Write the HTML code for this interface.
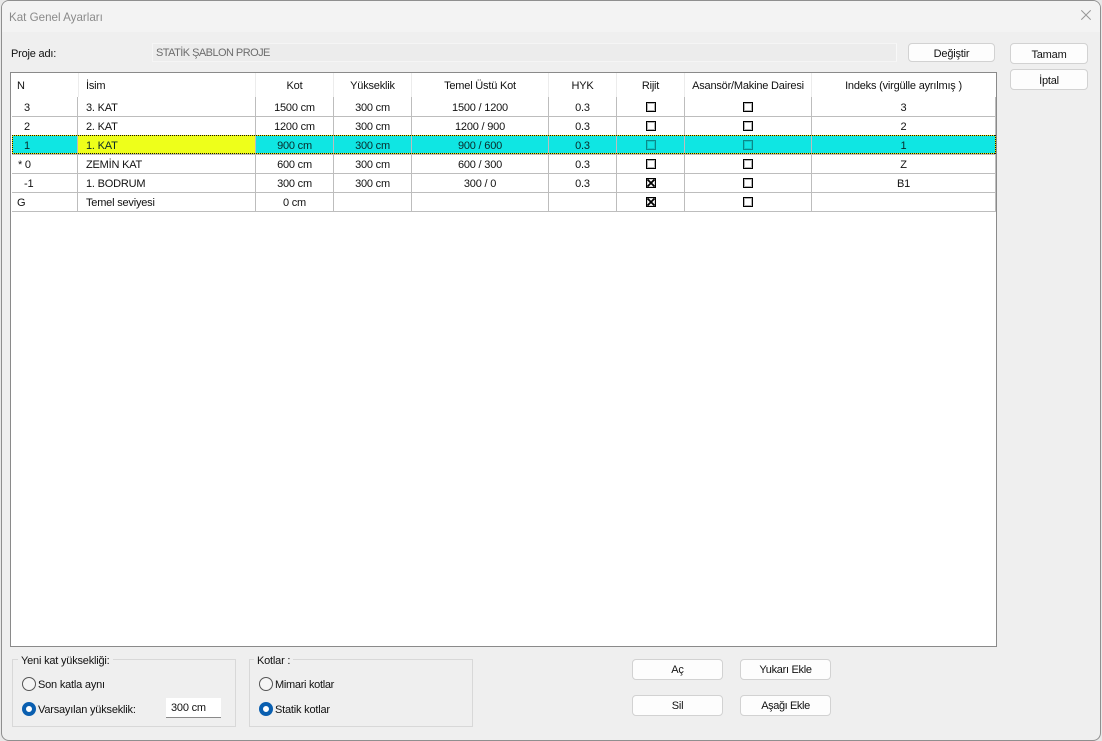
<!DOCTYPE html>
<html>
<head>
<meta charset="utf-8">
<style>
html,body{margin:0;padding:0;width:1102px;height:741px;overflow:hidden;background:#e8e8e8;}
*{box-sizing:border-box;}
body{font-family:"Liberation Sans",sans-serif;font-size:11px;letter-spacing:-.2px;color:#111;position:relative;}
#win{position:absolute;left:1px;top:0;width:1100px;height:741px;background:#efefef;border:1px solid #8f8f8f;border-radius:8px;overflow:hidden;}
#tb{position:absolute;left:0;top:0;width:1098px;height:31px;background:#f3f3f3;}
.a{position:absolute;white-space:nowrap;}
.btn{position:absolute;background:#fdfdfd;border:1px solid #d2d2d2;border-radius:4px;text-align:center;white-space:nowrap;}
#grid{position:absolute;left:10px;top:72px;width:987px;height:575px;background:#fff;border:1px solid #8a8a8a;}
.r{position:absolute;left:12px;width:984px;height:20px;border-bottom:1px solid #bdbdbd;}
.c{position:absolute;top:0;height:19px;line-height:23px;text-align:center;white-space:nowrap;border-right:1px solid #bdbdbd;overflow:hidden;}
.c0{left:0;width:66px;text-align:left;}
.c1{left:66px;width:178px;text-align:left;padding-left:8px;}
.c2{left:244px;width:78px;}
.c3{left:322px;width:78px;}
.c4{left:400px;width:137px;}
.c5{left:537px;width:68px;}
.c6{left:605px;width:68px;}
.c7{left:673px;width:127px;}
.c8{left:800px;width:184px;}
.sel{background:#0fe6e3;}
.sel .c{color:#0a2a2a;}
.sel .c1{background:#eeff1a;}
.h{position:absolute;top:73px;height:24px;line-height:27px;text-align:center;white-space:nowrap;background:#fff;border-right:1px solid #ececec;}
.cb{position:absolute;width:10px;height:10px;border:1px solid #000;background:#fff;box-shadow:inset 0 0 0 1px rgba(0,0,0,.3);}
.sel .cb{background:transparent;border-color:#0a8a8a;box-shadow:inset 0 0 0 1px rgba(10,138,138,.3);}
.dot{position:absolute;left:12px;width:984px;height:1px;background:repeating-linear-gradient(90deg,#111 0 1px,#ee0 1px 2px);}
.gb{position:absolute;border:1px solid #d8d8d8;}
.rad{position:absolute;width:14px;height:14px;border-radius:50%;border:1px solid #555;background:#f5f5f5;}
.rad.on{border:4px solid #0a5fb0;background:#fff;}
</style>
</head>
<body>
<div id="win"><div id="tb"></div></div>

<div class="a" style="left:9px;top:10px;line-height:15px;color:#8a8a8a;font-size:11.6px;letter-spacing:0;">Kat Genel Ayarları</div>
<svg class="a" style="left:1081px;top:10px" width="10" height="10" viewBox="0 0 10 10"><path d="M.3.3l9.4 9.4M9.7.3L.3 9.7" stroke="#979797" stroke-width="1" fill="none"/></svg>

<div class="a" style="left:11px;top:47px;line-height:15px;">Proje adı:</div>
<div class="a" style="left:152px;top:43px;width:745px;height:19px;background:#ececec;border:1px solid #f5f5f5;border-right-color:#f8f8f8;color:#6d6d6d;line-height:18px;padding-left:3px;letter-spacing:-.55px;">STATİK ŞABLON PROJE</div>
<div class="btn" style="left:908px;top:43px;width:87px;height:19px;line-height:20px;">Değiştir</div>
<div class="btn" style="left:1010px;top:43px;width:78px;height:21px;line-height:22px;">Tamam</div>
<div class="btn" style="left:1010px;top:69px;width:78px;height:21px;line-height:22px;">İptal</div>

<div id="grid"></div>
<div class="h" style="left:11px;width:68px;text-align:left;padding-left:6px;">N</div>
<div class="h" style="left:79px;width:177px;text-align:left;padding-left:7px;">İsim</div>
<div class="h" style="left:256px;width:78px;">Kot</div>
<div class="h" style="left:334px;width:78px;">Yükseklik</div>
<div class="h" style="left:412px;width:137px;">Temel Üstü Kot</div>
<div class="h" style="left:549px;width:68px;">HYK</div>
<div class="h" style="left:617px;width:68px;">Rijit</div>
<div class="h" style="left:685px;width:127px;">Asansör/Makine Dairesi</div>
<div class="h" style="left:812px;width:183px;border-right:0;">Indeks (virgülle ayrılmış )</div>

<div class="r" style="top:97px"><div class="c c0" style="padding-left:12px">3</div><div class="c c1">3. KAT</div><div class="c c2">1500 cm</div><div class="c c3">300 cm</div><div class="c c4">1500 / 1200</div><div class="c c5">0.3</div><div class="c c6"></div><div class="c c7"></div><div class="c c8">3</div><div class="cb" style="left:634px;top:5px"></div><div class="cb" style="left:731px;top:5px"></div></div>
<div class="r" style="top:116px"><div class="c c0" style="padding-left:12px">2</div><div class="c c1">2. KAT</div><div class="c c2">1200 cm</div><div class="c c3">300 cm</div><div class="c c4">1200 / 900</div><div class="c c5">0.3</div><div class="c c6"></div><div class="c c7"></div><div class="c c8">2</div><div class="cb" style="left:634px;top:5px"></div><div class="cb" style="left:731px;top:5px"></div></div>
<div class="r sel" style="top:135px"><div class="c c0" style="padding-left:12px">1</div><div class="c c1">1. KAT</div><div class="c c2">900 cm</div><div class="c c3">300 cm</div><div class="c c4">900 / 600</div><div class="c c5">0.3</div><div class="c c6"></div><div class="c c7"></div><div class="c c8">1</div><div class="cb" style="left:634px;top:5px"></div><div class="cb" style="left:731px;top:5px"></div></div>
<div class="r" style="top:154px"><div class="c c0" style="padding-left:6px">* 0</div><div class="c c1">ZEMİN KAT</div><div class="c c2">600 cm</div><div class="c c3">300 cm</div><div class="c c4">600 / 300</div><div class="c c5">0.3</div><div class="c c6"></div><div class="c c7"></div><div class="c c8">Z</div><div class="cb" style="left:634px;top:5px"></div><div class="cb" style="left:731px;top:5px"></div></div>
<div class="r" style="top:173px"><div class="c c0" style="padding-left:12px">-1</div><div class="c c1">1. BODRUM</div><div class="c c2">300 cm</div><div class="c c3">300 cm</div><div class="c c4">300 / 0</div><div class="c c5">0.3</div><div class="c c6"></div><div class="c c7"></div><div class="c c8">B1</div><svg class="a" style="left:634px;top:5px" width="10" height="10" viewBox="0 0 10 10"><rect x=".5" y=".5" width="9" height="9" fill="#fff" stroke="#000" stroke-width="1.3"/><path d="M1.5 1.5l7 7M8.5 1.5l-7 7" stroke="#000" stroke-width="1.8"/></svg><div class="cb" style="left:731px;top:5px"></div></div>
<div class="r" style="top:192px"><div class="c c0" style="padding-left:5px">G</div><div class="c c1">Temel seviyesi</div><div class="c c2">0 cm</div><div class="c c3"></div><div class="c c4"></div><div class="c c5"></div><div class="c c6"></div><div class="c c7"></div><div class="c c8"></div><svg class="a" style="left:634px;top:5px" width="10" height="10" viewBox="0 0 10 10"><rect x=".5" y=".5" width="9" height="9" fill="#fff" stroke="#000" stroke-width="1.3"/><path d="M1.5 1.5l7 7M8.5 1.5l-7 7" stroke="#000" stroke-width="1.8"/></svg><div class="cb" style="left:731px;top:5px"></div></div>

<div class="dot" style="top:135px"></div>
<div class="dot" style="top:153px"></div>
<div class="a" style="left:12px;top:135px;width:1px;height:19px;background:repeating-linear-gradient(180deg,#111 0 1px,#ee0 1px 2px);"></div>
<div class="a" style="left:995px;top:135px;width:1px;height:19px;background:repeating-linear-gradient(180deg,#111 0 1px,#ee0 1px 2px);"></div>

<div class="gb" style="left:12px;top:659px;width:224px;height:68px;"></div>
<div class="a" style="left:18px;top:654px;background:#efefef;padding:0 3px;line-height:14px;">Yeni kat yüksekliği:</div>
<div class="rad" style="left:22px;top:677px;"></div>
<div class="a" style="left:38px;top:678px;line-height:15px;">Son katla aynı</div>
<div class="rad on" style="left:22px;top:702px;"></div>
<div class="a" style="left:38px;top:703px;line-height:15px;">Varsayılan yükseklik:</div>
<div class="a" style="left:166px;top:698px;width:55px;height:20px;background:#fff;border-bottom:1px solid #8a8a8a;line-height:20px;padding-left:5px;">300 cm</div>

<div class="gb" style="left:249px;top:659px;width:224px;height:68px;"></div>
<div class="a" style="left:254px;top:654px;background:#efefef;padding:0 3px;line-height:14px;">Kotlar :</div>
<div class="rad" style="left:259px;top:677px;"></div>
<div class="a" style="left:275px;top:678px;line-height:15px;letter-spacing:-.3px;">Mimari kotlar</div>
<div class="rad on" style="left:259px;top:702px;"></div>
<div class="a" style="left:275px;top:703px;line-height:15px;">Statik kotlar</div>

<div class="btn" style="left:632px;top:659px;width:91px;height:21px;line-height:21px;">Aç</div>
<div class="btn" style="left:740px;top:659px;width:91px;height:21px;line-height:21px;letter-spacing:-.3px;">Yukarı Ekle</div>
<div class="btn" style="left:632px;top:695px;width:91px;height:21px;line-height:21px;">Sil</div>
<div class="btn" style="left:740px;top:695px;width:91px;height:21px;line-height:21px;letter-spacing:-.4px;">Aşağı Ekle</div>
</body>
</html>
